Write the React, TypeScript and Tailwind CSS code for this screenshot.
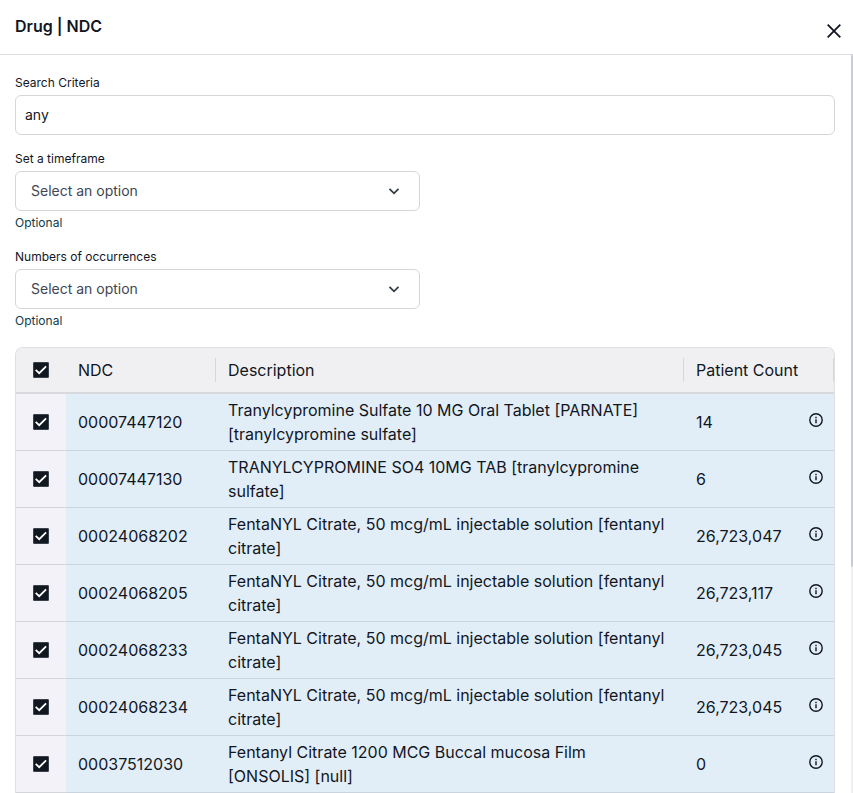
import React, { useState } from 'react';

interface DrugRow {
  ndc: string;
  description: string;
  patientCount: string;
}

const DRUGS: DrugRow[] = [
  { ndc: '00007447120', description: 'Tranylcypromine Sulfate 10 MG Oral Tablet [PARNATE] [tranylcypromine sulfate]', patientCount: '14' },
  { ndc: '00007447130', description: 'TRANYLCYPROMINE SO4 10MG TAB [tranylcypromine sulfate]', patientCount: '6' },
  { ndc: '00024068202', description: 'FentaNYL Citrate, 50 mcg/mL injectable solution [fentanyl citrate]', patientCount: '26,723,047' },
  { ndc: '00024068205', description: 'FentaNYL Citrate, 50 mcg/mL injectable solution [fentanyl citrate]', patientCount: '26,723,117' },
  { ndc: '00024068233', description: 'FentaNYL Citrate, 50 mcg/mL injectable solution [fentanyl citrate]', patientCount: '26,723,045' },
  { ndc: '00024068234', description: 'FentaNYL Citrate, 50 mcg/mL injectable solution [fentanyl citrate]', patientCount: '26,723,045' },
  { ndc: '00037512030', description: 'Fentanyl Citrate 1200 MCG Buccal mucosa Film [ONSOLIS] [null]', patientCount: '0' },
];

const CloseIcon = () => (
  <svg className="size-4" viewBox="0 0 16 16" fill="none" stroke="currentColor" strokeWidth="1.8">
    <path d="M1.7 1.7l12.6 12.6M14.3 1.7L1.7 14.3" />
  </svg>
);

const ChevronIcon = () => (
  <svg className="size-4" viewBox="0 0 16 16" fill="none" stroke="currentColor" strokeWidth="1.8">
    <path d="M3.5 5.8L8 10.3l4.5-4.5" />
  </svg>
);

const InfoIcon = () => (
  <svg className="size-4" viewBox="0 0 16 16" fill="none" stroke="currentColor" strokeWidth="1.4">
    <circle cx="8" cy="8" r="6.2" />
    <path d="M8 7.2v4M8 4.8v1.4" />
  </svg>
);

interface CheckboxProps {
  label: string;
  checked: boolean;
  onChange: () => void;
}

const Checkbox: React.FC<CheckboxProps> = ({ label, checked, onChange }) => (
  <span className="relative mx-auto block size-4">
    <input
      type="checkbox"
      aria-label={label}
      checked={checked}
      onChange={onChange}
      className="block size-4 appearance-none rounded-[1px] border border-[#3c424b] checked:bg-[#111820]"
    />
    {checked && (
      <svg className="pointer-events-none absolute inset-0 size-4" viewBox="0 0 16 16" fill="none" stroke="white" strokeWidth="1.8">
        <path d="M2.7 7.8l3.5 3.4 6.9-6.9" />
      </svg>
    )}
  </span>
);

interface SelectFieldProps {
  id: string;
  label: string;
}

const SelectField: React.FC<SelectFieldProps> = ({ id, label }) => (
  <div className="flex w-1/2 max-w-[405px] flex-col gap-1 text-xs">
    <label htmlFor={id}>{label}</label>
    <div className="relative">
      <select
        id={id}
        className="block h-10 w-full appearance-none rounded-md border border-[#d6d6d9] bg-white px-[15px] text-sm text-[#414652]"
      >
        <option>Select an option</option>
      </select>
      <span className="pointer-events-none absolute inset-y-0 right-[18px] flex items-center text-[#353b46]">
        <ChevronIcon />
      </span>
    </div>
    <span className="text-[#0c3c4c]">Optional</span>
  </div>
);

export default function App() {
  const [query, setQuery] = useState('any');
  const [selected, setSelected] = useState<string[]>(DRUGS.map((d) => d.ndc));

  const allSelected = selected.length === DRUGS.length;

  const toggle = (ndc: string) => {
    setSelected((prev) => (prev.includes(ndc) ? prev.filter((n) => n !== ndc) : [...prev, ndc]));
  };

  return (
    <div className="flex min-h-screen flex-col bg-white font-['Inter',sans-serif] text-[#12161f]">
      <header className="flex justify-between border-b border-[#dcdcdf] pt-[14px] pr-[11px] pb-4 pl-[15px]">
        <h1 className="text-base leading-6 font-semibold">Drug | NDC</h1>
        <button aria-label="Close" className="-mb-px self-end">
          <CloseIcon />
        </button>
      </header>

      <div className="flex flex-1">
        <main className="flex min-w-0 flex-1 flex-col gap-[18px] pt-5 pr-4 pl-[15px]">
          <div className="flex flex-col gap-4">
            <div className="flex flex-col gap-1 text-xs">
              <label htmlFor="criteria">Search Criteria</label>
              <input
                id="criteria"
                type="text"
                value={query}
                onChange={(e) => setQuery(e.target.value)}
                className="h-10 w-full rounded-md border border-[#d6d6d9] px-[9px] pb-[2px] text-sm"
              />
            </div>
            <SelectField id="timeframe" label="Set a timeframe" />
          </div>
          <SelectField id="occurrences" label="Numbers of occurrences" />

          <div className="overflow-hidden rounded-t-lg border border-b-0 border-[#dddfe2]">
            <table className="w-full table-fixed border-separate border-spacing-0 text-left text-base">
              <colgroup>
                <col className="w-[50px]" />
                <col className="w-[150px]" />
                <col />
                <col className="w-[150px]" />
              </colgroup>
              <thead>
                <tr className="h-[46px] bg-[#f0f0f2] *:border-b-2 *:border-[#d8d9dc] *:p-0 *:font-normal">
                  <th>
                    <Checkbox
                      label="Select all"
                      checked={allSelected}
                      onChange={() => setSelected(allSelected ? [] : DRUGS.map((d) => d.ndc))}
                    />
                  </th>
                  <th><div className="border-r border-[#d6d7da] pl-3">NDC</div></th>
                  <th><div className="border-r border-[#d6d7da] pl-3">Description</div></th>
                  <th><div className="border-r border-[#d6d7da] pl-3">Patient Count</div></th>
                </tr>
              </thead>
              <tbody>
                {DRUGS.map((drug) => (
                  <tr key={drug.ndc} className="*:border-b *:border-[#c9d4de] *:bg-[#e1eef8] *:px-3 *:py-1">
                    <td className="border-[#d4d5da]! bg-[#f3f2f8]!">
                      <Checkbox
                        label={`Select ${drug.ndc}`}
                        checked={selected.includes(drug.ndc)}
                        onChange={() => toggle(drug.ndc)}
                      />
                    </td>
                    <td>{drug.ndc}</td>
                    <td>{drug.description}</td>
                    <td className="pr-[10px]!">
                      <div className="flex justify-between">
                        {drug.patientCount}
                        <button aria-label={`Details for ${drug.ndc}`} className="self-start pt-[2px]">
                          <InfoIcon />
                        </button>
                      </div>
                    </td>
                  </tr>
                ))}
              </tbody>
            </table>
          </div>
        </main>

        {/* Scroll track */}
        <div className="w-[2px] bg-[#f0f0f1]">
          <div className="h-[512px] rounded-full bg-[#c9cdd3]" />
        </div>
      </div>
    </div>
  );
}
